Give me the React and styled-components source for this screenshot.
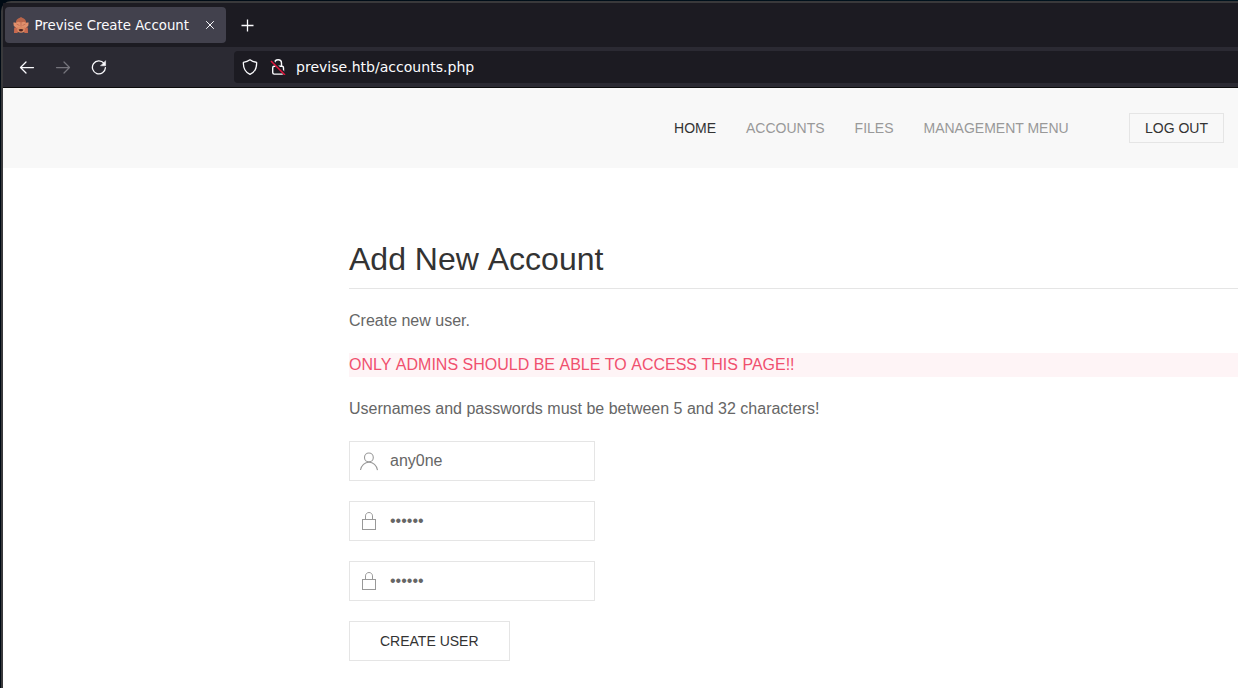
import React from "react";
import styled, { createGlobalStyle } from "styled-components";

const Global = createGlobalStyle`
  *, *::before, *::after { box-sizing: border-box; }
  body { margin: 0; overflow: hidden; background: #001420; }
`;

const Desktop = styled.div`
  height: 688px;
  padding-top: 1px;
  overflow: hidden;
  background: linear-gradient(90deg, #000a14, #00141f);
  font-family: "Liberation Sans", Arial, sans-serif;
`;

const Window = styled.div`
  display: flex;
  flex-direction: column;
  height: 687px;
  margin-left: 1px;
  border: solid #39393b;
  border-width: 2px 0 0 2px;
  border-top-left-radius: 10px;
  background: #39393b;
`;

const Chrome = styled.div`
  font: 14px "DejaVu Sans", sans-serif;
  color: #fbfbfe;
  border-bottom: 1px solid #0c0c0d;
`;

const TabStrip = styled.div`
  display: flex;
  align-items: center;
  height: 44px;
  padding-left: 2px;
  background: #1c1b22;
`;

const Tab = styled.div`
  display: flex;
  align-items: center;
  width: 221px;
  height: 36px;
  padding: 0 11px 0 8px;
  border-radius: 4px;
  background: #42414d;
  white-space: nowrap;
`;

const TabTitle = styled.span`
  flex: 1;
  margin-left: 5.5px;
  font-size: 13.33px;
`;

const NewTab = styled.div`
  display: flex;
  margin-left: 14px;
`;

const Toolbar = styled.div`
  display: flex;
  align-items: center;
  height: 40px;
  padding-left: 16px;
  background: #2b2a33;
`;

const NavButtons = styled.div`
  display: flex;
  gap: 20px;
  width: 215px;
`;

const AddressBar = styled.div`
  display: flex;
  align-items: center;
  flex: 1;
  height: 32px;
  padding-left: 8px;
  border-radius: 4px 0 0 4px;
  background: #1c1b22;
`;

const Address = styled.span`
  margin-left: 10px;
  font-size: 14.05px;
`;

const Icon = styled.svg`
  display: block;
  flex: none;
  fill: none;
  stroke: ${(p) => p.$color || "#fbfbfe"};
  stroke-width: ${(p) => p.$weight ?? 1.4};
  margin-left: ${(p) => p.$gap || 0}px;
`;

const Page = styled.div`
  flex: 1;
  background: #fff;
`;

const Navbar = styled.nav`
  display: flex;
  align-items: center;
  justify-content: flex-end;
  height: 80px;
  padding-right: 14px;
  background: #f8f8f8;
  font-size: 14px;
  text-transform: uppercase;
`;

const NavLink = styled.a`
  padding: 0 15px;
  color: ${(p) => (p.$active ? "#333" : "#999")};
`;

const Button = styled.button`
  height: ${(p) => (p.$small ? 30 : 40)}px;
  padding: 0 ${(p) => (p.$small ? 15 : 30)}px;
  margin-left: ${(p) => (p.$small ? 45.3 : 0)}px;
  border: 1px solid #e5e5e5;
  background: transparent;
  color: #333;
  font: 14px "Liberation Sans", Arial, sans-serif;
  line-height: ${(p) => (p.$small ? 28 : 38)}px;
  text-transform: uppercase;
`;

const Section = styled.main`
  padding: 70px 0 0 346px;
  color: #666;
  font-size: 16px;
  line-height: 24px;
`;

const Heading = styled.h2`
  margin: 0 0 20px;
  padding: 1px 0 7.4px;
  border-bottom: 1px solid #e5e5e5;
  color: #333;
  font-size: 32px;
  font-weight: 400;
  line-height: 41.6px;
`;

const Text = styled.p`
  margin: 0 0 20px;
  color: ${(p) => (p.$danger ? "#f0506e" : "#666")};
  background: ${(p) => (p.$danger ? "#fef4f6" : "transparent")};
`;

const Word = styled.span`
  display: inline-block;
`;

const Form = styled.form`
  display: flex;
  flex-direction: column;
  align-items: flex-start;
  gap: 20px;
`;

const Field = styled.label`
  display: flex;
  align-items: center;
  width: 246px;
  height: 40px;
  padding-left: 9px;
  border: 1px solid #e5e5e5;
`;

const Input = styled.input`
  flex: 1;
  min-width: 0;
  height: 38px;
  margin: 0 0 0 11px;
  padding: 0;
  border: 0;
  outline: 0;
  background: transparent;
  color: #666;
  font: 16px "Liberation Sans", Arial, sans-serif;
`;

// Keeps the kerning inside each word and the full width of the spaces.
const Words = ({ children }) =>
  children.split(" ").map((word, i) => (
    <React.Fragment key={i}>
      {i > 0 && " "}
      <Word>{word}</Word>
    </React.Fragment>
  ));

const Monkey = () => (
  <Icon width="16" height="16" viewBox="0 0 16 16" $color="none">
    <path d="M2.800 6C2.800 3 4.500 1.400 6.800.8L8 0l1.200.8C11.500 1.400 13.200 3 13.200 6v9H2.800z" fill="#b9654a" />
    <path d="M1.200 10.500h4L4.600 16H1zM14.800 10.500h-4l.6 5.500H15z" fill="#c8694f" />
    <ellipse cx="8" cy="12.300" rx="3.800" ry="3.500" fill="#d98a63" />
    <path d="M.3 5.200l.9.800.6-.9.900 1 2.300-1.300L8 5.400l3-.6 2.300 1.300.9-1 .6.900.9-.8-.5 3.800L12.500 11 8 9.600 3.500 11 .8 9z" fill="#e1906c" />
    <path d="M3.500 7l3 1.500M12.500 7l-3 1.500M8 5.500v4" stroke="#b6644c" strokeWidth=".7" />
    <path d="M5.600 12.400Q8 11.600 10.400 12.400 10 14.400 8 14.400T5.600 12.400" fill="#4b211f" />
  </Icon>
);

const UserIcon = () => (
  <Icon width="20" height="20" viewBox="0 0 20 20" $color="#999" $weight="1.1">
    <circle cx="9.900" cy="6.400" r="4.400" />
    <path d="M1.500,19 C2.300,14.500 5.800,11.200 10,11.200 C14.200,11.200 17.700,14.600 18.500,19.200" />
  </Icon>
);

const LockIcon = () => (
  <Icon width="20" height="20" viewBox="0 0 20 20" $color="#999" $weight="1">
    <rect x="3.500" y="8.500" width="13" height="10" />
    <path d="M6.500,8 L6.500,4.880 C6.500,3.010 8.070,1.500 10,1.500 C11.930,1.500 13.500,3.010 13.500,4.880 L13.500,8" />
  </Icon>
);

const Arrow = ({ flip, color }) => (
  <Icon width="16" height="16" viewBox="0 0 16 16" $color={color} $weight="1.250" strokeLinecap="round" strokeLinejoin="round">
    <path d={flip ? "M1.500 8.500h13M9 3l5.500 5.500L9 14" : "M14.500 8.500h-13M7 3L1.500 8.500 7 14"} />
  </Icon>
);

export default function App() {
  return (
    <Desktop>
      <Global />
      <Window>
        <Chrome>
          <TabStrip>
            <Tab>
              <Monkey />
              <TabTitle>Previse Create Account</TabTitle>
              <Icon width="10" height="10" viewBox="0 0 10 10" $weight="1">
                <path d="M1.200 1.200l7.600 7.600M8.800 1.200L1.200 8.800" />
              </Icon>
            </Tab>
            <NewTab>
              <Icon width="16" height="16" viewBox="0 0 16 16" $weight="1.300">
                <path d="M7.500 2.500v12M1.500 8.500h12" />
              </Icon>
            </NewTab>
          </TabStrip>
          <Toolbar>
            <NavButtons>
              <Arrow />
              <Arrow flip color="#75747c" />
              <Icon width="16" height="16" viewBox="0 0 16 16" $weight="1.300" strokeLinecap="round">
                <path d="M12.900 4.200A6.500 6.500 0 1 0 14.400 8.700" />
                <path d="M14.600 2v4.800H9.800z" fill="#fbfbfe" strokeWidth=".5" />
              </Icon>
            </NavButtons>
            <AddressBar>
              <Icon width="16" height="16" viewBox="0 0 16 16" $weight="1.300" strokeLinejoin="round">
                <path d="M8 .8c2 1.500 4 2.200 6.600 2.500.3 5-1.500 9.700-6.600 12.100C2.900 13 1.100 8.300 1.400 3.300 4 3 6 2.300 8 .8z" />
              </Icon>
              <Icon width="16" height="16" viewBox="0 0 16 16" $gap={12}>
                <path d="M4.700 7.500V4.200a3.400 3.400 0 0 1 6.800 0v3.300" />
                <rect x="2.700" y="7.300" width="10.800" height="7.800" rx="1.500" />
                <path d="M1.500 1.500l14 14" stroke="#1c1b22" strokeWidth="3" />
                <path d="M1 2l14 14" stroke="#e2143c" strokeWidth="1.500" />
              </Icon>
              <Address>previse.htb/accounts.php</Address>
            </AddressBar>
          </Toolbar>
        </Chrome>
        <Page>
          <Navbar>
            <NavLink $active>Home</NavLink>
            <NavLink>Accounts</NavLink>
            <NavLink>Files</NavLink>
            <NavLink>Management Menu</NavLink>
            <Button $small>Log Out</Button>
          </Navbar>
          <Section>
            <Heading><Words>Add New Account</Words></Heading>
            <Text>Create new user.</Text>
            <Text $danger><Words>ONLY ADMINS SHOULD BE ABLE TO ACCESS THIS PAGE!!</Words></Text>
            <Text>Usernames and passwords must be between 5 and 32 characters!</Text>
            <Form>
              <Field>
                <UserIcon />
                <Input type="text" defaultValue="any0ne" />
              </Field>
              <Field>
                <LockIcon />
                <Input type="password" defaultValue="secret" />
              </Field>
              <Field>
                <LockIcon />
                <Input type="password" defaultValue="secret" />
              </Field>
              <Button type="button">Create User</Button>
            </Form>
          </Section>
        </Page>
      </Window>
    </Desktop>
  );
}
